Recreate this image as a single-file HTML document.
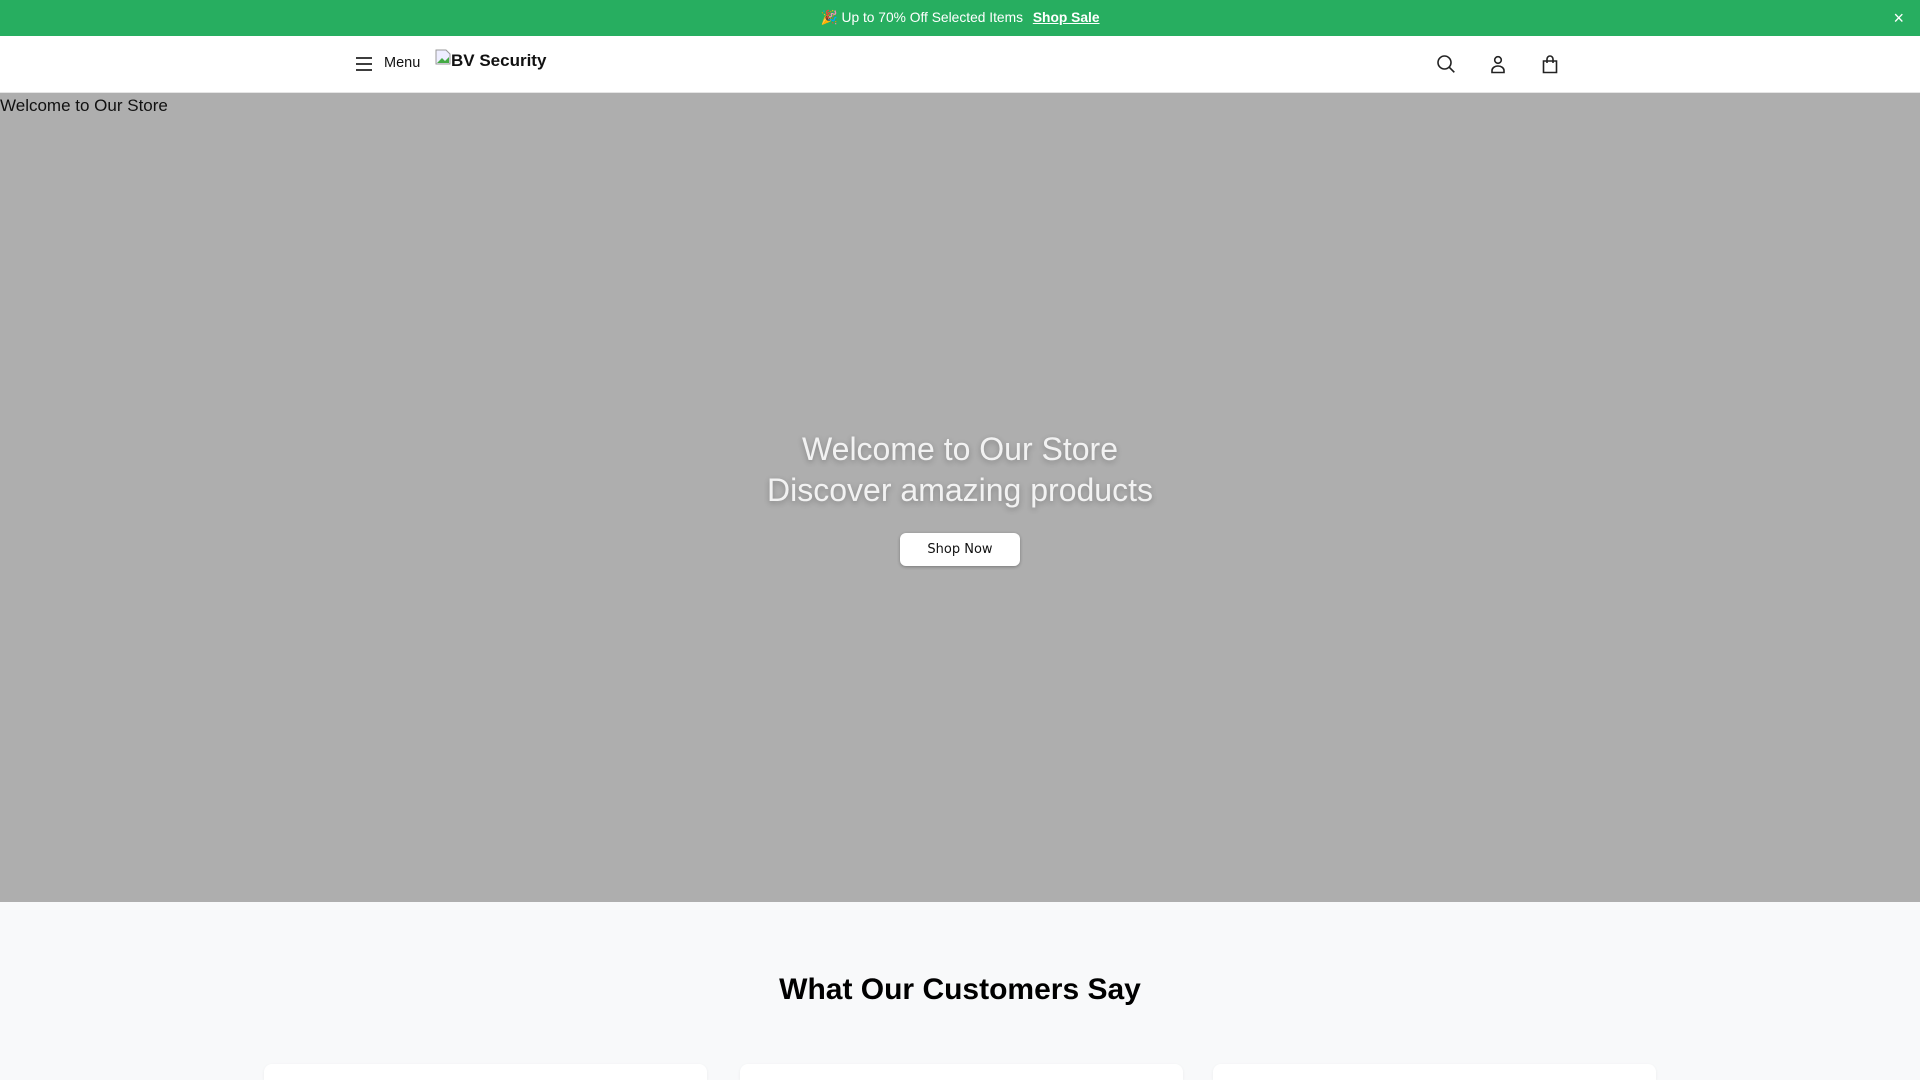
<!DOCTYPE html>
<html><head><meta charset="utf-8"><style>
*{margin:0;padding:0;box-sizing:border-box}
html,body{width:1920px;height:1080px;overflow:hidden}
body{font-family:"Liberation Sans",Arial,sans-serif;background:#f8f9fa;position:relative}
.banner{position:absolute;left:0;top:0;width:1920px;height:36px;background:#27ae60;color:#fff;font-size:13.8px;line-height:36px;text-align:center}
.banner a{color:#fff;font-weight:bold;text-decoration:underline;margin-left:6px}
.banner .x{position:absolute;right:16px;top:0;font-size:18px}
.header{position:absolute;top:36px;left:0;width:1920px;height:57px;background:#fff;border-bottom:1px solid #e5e5e5}
.hero{position:absolute;top:93px;left:0;width:1920px;height:809px;background:#aeaeae}
.alt{position:absolute;left:0;top:3px;font-size:17px;color:#111}
h1{position:absolute;left:0;width:1920px;text-align:center;color:#f2f2f2;font-weight:normal;font-size:32px;line-height:40px;text-shadow:0 2px 6px rgba(0,0,0,.25)}
.btn{position:absolute;left:900px;top:440px;width:120px;height:33px;background:#fff;border-radius:6px;font-family:"DejaVu Sans",sans-serif;font-size:13px;line-height:33px;text-align:center;color:#111;box-shadow:0 1px 3px rgba(0,0,0,.3)}
h2{position:absolute;top:973px;left:0;width:1920px;text-align:center;font-size:30px;font-weight:bold;color:#000}
.card{position:absolute;top:1064px;width:443px;height:16px;background:#fff;border-radius:8px 8px 0 0;box-shadow:0 1px 3px rgba(0,0,0,.06)}
</style></head><body>
<div class="banner">🎉 Up to 70% Off Selected Items <a>Shop Sale</a><span class="x">×</span></div>
<div class="header">
<svg style="position:absolute;left:355px;top:19px" width="18" height="18" viewBox="0 0 18 18" fill="none" stroke="#222" stroke-width="1.8"><path d="M1 3h16M1 9h16M1 15h16"/></svg>
<span style="position:absolute;left:384px;top:19px;font-size:14.5px;color:#111">Menu</span>
<svg style="position:absolute;left:435px;top:13px" width="16" height="16" viewBox="0 0 16 16"><path d="M1 1h10l4 4v10H1z" fill="#eef" stroke="#999"/><path d="M2 14l5-5 3 3 4-4v6z" fill="#4a4"/></svg>
<span style="position:absolute;left:451px;top:15px;font-size:17px;font-weight:bold;color:#111">BV Security</span>
<svg style="position:absolute;left:1436px;top:18px" width="20" height="20" viewBox="0 0 20 20" fill="none" stroke="#222" stroke-width="1.6"><circle cx="8.5" cy="8.5" r="6.5"/><path d="M13.3 13.3l5 5"/></svg>
<svg style="position:absolute;left:1488px;top:18px" width="20" height="20" viewBox="0 0 20 20" fill="none" stroke="#222" stroke-width="1.6"><circle cx="10" cy="6" r="3.3"/><path d="M4 18.5v-2a6 4.5 0 0 1 12 0v2z"/></svg>
<svg style="position:absolute;left:1540px;top:18px" width="20" height="20" viewBox="0 0 20 20" fill="none" stroke="#222" stroke-width="1.6"><path d="M3.5 7h13v11.5h-13z"/><path d="M7 9V5a3 3 0 0 1 6 0v4"/></svg>
</div>
<div class="hero">
<div class="alt">Welcome to Our Store</div>
<h1 style="top:336px">Welcome to Our Store</h1>
<h1 style="top:377px">Discover amazing products</h1>
<div class="btn">Shop Now</div>
</div>
<h2>What Our Customers Say</h2>
<div class="card" style="left:264px"></div>
<div class="card" style="left:740px"></div>
<div class="card" style="left:1213px"></div>
</body></html>
